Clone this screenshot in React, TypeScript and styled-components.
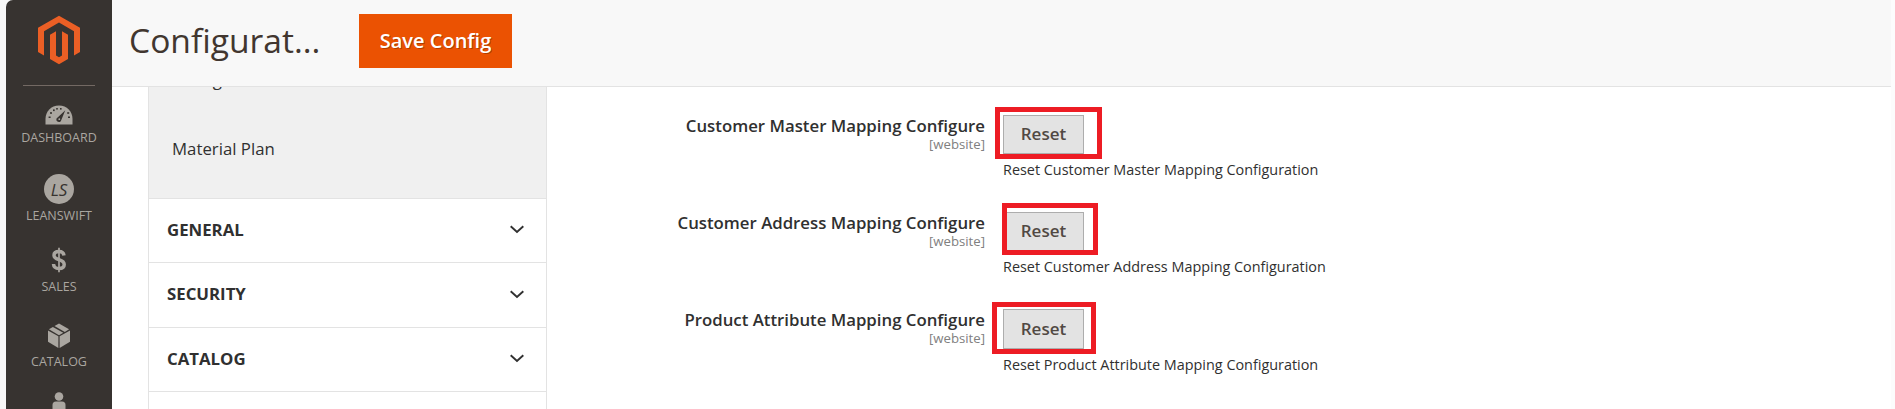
import React from 'react';
import styled, { createGlobalStyle } from 'styled-components';

const GlobalStyle = createGlobalStyle`
  *, *::before, *::after { box-sizing: border-box; }
  body {
    margin: 0;
    background: #fff;
    color: #303030;
    font-family: 'Open Sans', 'Noto Sans', sans-serif;
    overflow: hidden;
  }
`;

const Page = styled.div`
  display: flex;
  width: 1895px;
  height: 409px;
  overflow: hidden;
  border-left: 6px solid #f7f7f7;
  border-right: 4px solid #fcfcfc;
  background: #fff;
`;

const Rail = styled.div`
  flex: 0 0 106px;
  background: #f7f7f7;
`;

const Sidebar = styled.nav`
  display: flex;
  flex-direction: column;
  align-items: center;
  height: 409px;
  overflow: hidden;
  background: #373330;
  border-top-left-radius: 7px;
`;

const LogoArea = styled.div`
  display: flex;
  flex: 0 0 86px;
  justify-content: center;
  width: 72px;
  padding-top: 15px;
  border-bottom: 1px solid #736963;
`;

const MenuItem = styled.a<{ $height: number; $gap: number }>`
  display: flex;
  flex: 0 0 auto;
  flex-direction: column;
  align-items: center;
  gap: ${(p) => p.$gap}px;
  height: ${(p) => p.$height}px;
  color: #aaa6a0;
`;

const MenuIcon = styled.span<{ $height: number }>`
  display: flex;
  align-items: center;
  justify-content: center;
  height: ${(p) => p.$height}px;
`;

const MenuLabel = styled.span`
  font-size: 12.5px;
  line-height: 18px;
  text-transform: uppercase;
`;

const Menu = styled.div`
  display: flex;
  flex-direction: column;
  padding-top: 15px;
`;

const LsBadge = styled.span`
  width: 30px;
  height: 30px;
  border-radius: 50%;
  background: #aaa6a0;
  color: #373330;
  font-size: 17px;
  font-style: italic;
  line-height: 31px;
  text-align: center;
`;

const Main = styled.main`
  display: flex;
  flex: 1;
  flex-direction: column;
  min-width: 0;
`;

const Header = styled.header`
  display: flex;
  flex: 0 0 87px;
  align-items: flex-start;
  padding: 14px 0 0 17px;
  background: #f8f8f8;
  border-bottom: 1px solid #e3e3e3;
`;

const Title = styled.h1`
  width: 230px;
  margin: 3px 0 0;
  color: #41362f;
  font-size: 33.6px;
  font-weight: 400;
  line-height: 46px;
  white-space: nowrap;
`;

const SaveButton = styled.button`
  width: 153px;
  height: 54px;
  padding: 0;
  border: 0;
  background: #eb5202;
  color: #fff;
  font: 600 20px/54px 'Open Sans', sans-serif;
  text-shadow: 1px 1px 0 rgba(0, 0, 0, 0.25);
`;

const Content = styled.div`
  display: flex;
  flex: 1;
  min-height: 0;
  padding-left: 36px;
  overflow: hidden;
`;

const Tabs = styled.aside`
  flex: 0 0 399px;
  height: 340px;
  border: solid #e3e3e3;
  border-width: 0 1px;
`;

const OpenSection = styled.div`
  display: flex;
  flex-direction: column;
  justify-content: flex-end;
  height: 112px;
  padding: 0 0 37px 23px;
  background: #f0f0f0;
  border-bottom: 1px solid #e3e3e3;
  overflow: hidden;
`;

const SubItem = styled.a`
  flex: 0 0 auto;
  color: #303030;
  font-size: 16.8px;
  line-height: 24px;
  & + & { margin-top: 45px; }
`;

const Section = styled.div<{ $height: number }>`
  display: flex;
  align-items: center;
  justify-content: space-between;
  height: ${(p) => p.$height}px;
  padding: 0 22px 2px 18px;
  border-bottom: 1px solid #e3e3e3;
`;

const SectionName = styled.strong`
  font-size: 16.8px;
  font-weight: 700;
  line-height: 24px;
`;

const Form = styled.div`
  display: flex;
  flex-direction: column;
  padding-top: 28px;
`;

const Field = styled.div<{ $height: number }>`
  display: grid;
  flex: 0 0 auto;
  grid-template-columns: 438px 1fr;
  column-gap: 18px;
  height: ${(p) => p.$height}px;
`;

const Caption = styled.div`
  text-align: right;
  white-space: nowrap;
`;

const FieldName = styled.div`
  padding-top: 1px;
  font-size: 16.8px;
  font-weight: 600;
  line-height: 20px;
`;

const Scope = styled.div`
  color: #808080;
  font-size: 13.2px;
  line-height: 17px;
`;

const Control = styled.div`
  position: relative;
  white-space: nowrap;
`;

const ResetButton = styled.button<{ $height: number }>`
  display: block;
  width: 81px;
  height: ${(p) => p.$height}px;
  padding: 0 0 2px;
  border: 1px solid #adadad;
  background: #e3e3e3;
  color: #514943;
  font: 600 17px/35px 'Open Sans', sans-serif;
`;

const Highlight = styled.span<{ $left: number; $top: number; $width: number }>`
  position: absolute;
  left: ${(p) => p.$left}px;
  top: ${(p) => p.$top}px;
  width: ${(p) => p.$width}px;
  height: 52px;
  border: 5px solid #ed1c24;
`;

const Note = styled.div<{ $gap: number }>`
  margin-top: ${(p) => p.$gap}px;
  font-size: 14.4px;
  line-height: 20px;
`;

const Logo = () => (
  <svg width="42" height="50" viewBox="0 0 42 50" fill="#eb5f25">
    <path d="M21 .7 42 12.8V37l-6 3.5V16.3L21 7.6 6 16.3v24.2L0 37V12.8Z" />
    <path d="M12 19.7 18 16.3V40.5L21 42.3 24 40.5V16.3L30 19.7V44L21 49.3 12 44Z" />
  </svg>
);

const Gauge = () => (
  <svg width="28" height="20" viewBox="0 0 28 20">
    <path d="M.5 19.5V14C.5 6.5 6 .5 14 .5S27.500 6.500 27.500 14v5.500Z" fill="#aaa6a0" />
    <g fill="#373330">
      <rect x="3.600" y="11.500" width="2" height="1.500" />
      <rect x="5" y="7.200" width="2" height="1.600" />
      <rect x="8" y="4.400" width="1.700" height="1.700" />
      <rect x="11.200" y="3" width="1.600" height="1.600" />
      <rect x="15" y="3" width="1.600" height="1.600" />
      <rect x="22.200" y="7.200" width="2" height="1.600" />
      <rect x="23" y="11.500" width="2" height="1.500" />
      <path d="M20.300 5.200 16.300 15a2.500 2.500 0 1 1-3.700-2.600Z" />
    </g>
    <circle cx="14.300" cy="14.200" r=".9" fill="#aaa6a0" />
  </svg>
);

const Dollar = () => (
  <svg width="17" height="26" viewBox="0 0 17 26" fill="none" stroke="#aaa6a0">
    <path d="M13 8.500C12.600 5.600 10.800 4.500 8 4.500S3 5.800 3 8.300c0 2.900 2.300 3.500 5 4.300s5.200 1.700 5.200 4.900c0 2.600-2.100 4-5.200 4s-5.300-1.500-5.500-4.500" strokeWidth="3.500" />
    <path d="M8 .8V25.200" strokeWidth="1.700" />
  </svg>
);

const Box = () => (
  <svg width="23" height="25" viewBox="0 0 23 25" fill="#aaa6a0">
    <path d="M0 7.500 10.400 13.300V25L0 18.800Z" />
    <path d="M22 7.500 11.600 13.300V25L22 18.800Z" />
    <path d="M.9 6.300 4.900 4 15.300 9.800 11 12.200Z" />
    <path d="M6.500 3.100 11 .5 21.100 6.300 16.800 8.900Z" />
  </svg>
);

const Person = () => (
  <svg width="16" height="28" viewBox="0 0 16 28" fill="#aaa6a0">
    <circle cx="8" cy="4.500" r="4.300" />
    <path d="M1.500 28V13Q1.500 9.500 5 9.500H11Q14.500 9.500 14.500 13V28Z" />
  </svg>
);

const Chevron = () => (
  <svg width="14" height="9" viewBox="0 0 14 9" fill="none" stroke="#303030" strokeWidth="1.900">
    <path d="M.7 1.200 7 7 13.300 1.200" />
  </svg>
);

const menu = [
  { label: 'Dashboard', icon: <Gauge />, iconHeight: 28, height: 73, gap: 0 },
  { label: 'LeanSwift', icon: <LsBadge>LS</LsBadge>, iconHeight: 30, height: 71, gap: 3 },
  { label: 'Sales', icon: <Dollar />, iconHeight: 30, height: 75, gap: 3 },
  { label: 'Catalog', icon: <Box />, iconHeight: 30, height: 71, gap: 3 },
  { label: '', icon: <Person />, iconHeight: 30, height: 75, gap: 3 },
];

const sections = [
  { name: 'GENERAL', height: 64 },
  { name: 'SECURITY', height: 65 },
  { name: 'CATALOG', height: 64 },
];

const fields = [
  { name: 'Customer Master Mapping', height: 97, button: 39, gap: 6, mark: [-8, -8, 107] },
  { name: 'Customer Address Mapping', height: 97, button: 39, gap: 6, mark: [-1, -9, 96] },
  { name: 'Product Attribute Mapping', height: 97, button: 40, gap: 6, mark: [-11, -7, 104] },
];

export default function App() {
  return (
    <>
      <GlobalStyle />
      <Page>
        <Rail>
          <Sidebar>
            <LogoArea>
              <Logo />
            </LogoArea>
            <Menu>
              {menu.map((m) => (
                <MenuItem key={m.label} $height={m.height} $gap={m.gap}>
                  <MenuIcon $height={m.iconHeight}>{m.icon}</MenuIcon>
                  {m.label && <MenuLabel>{m.label}</MenuLabel>}
                </MenuItem>
              ))}
            </Menu>
          </Sidebar>
        </Rail>
        <Main>
          <Header>
            <Title>Configurat...</Title>
            <SaveButton>Save Config</SaveButton>
          </Header>
          <Content>
            <Tabs>
              <OpenSection>
                <SubItem>Config</SubItem>
                <SubItem>Material Plan</SubItem>
              </OpenSection>
              {sections.map((s) => (
                <Section key={s.name} $height={s.height}>
                  <SectionName>{s.name}</SectionName>
                  <Chevron />
                </Section>
              ))}
            </Tabs>
            <Form>
              {fields.map((f) => (
                <Field key={f.name} $height={f.height}>
                  <Caption>
                    <FieldName>{f.name} Configure</FieldName>
                    <Scope>[website]</Scope>
                  </Caption>
                  <Control>
                    <ResetButton $height={f.button}>Reset</ResetButton>
                    <Highlight $left={f.mark[0]} $top={f.mark[1]} $width={f.mark[2]} />
                    <Note $gap={f.gap}>Reset {f.name} Configuration</Note>
                  </Control>
                </Field>
              ))}
            </Form>
          </Content>
        </Main>
      </Page>
    </>
  );
}
